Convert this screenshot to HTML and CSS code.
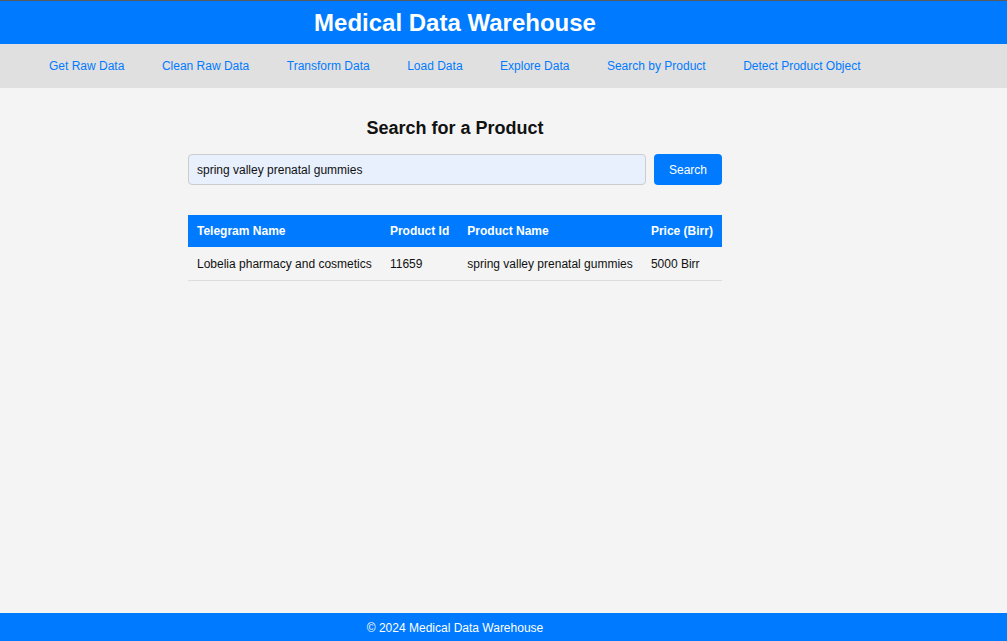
FILE: index.html
```html
<!DOCTYPE html>
<html lang="en">
<head>
<meta charset="utf-8">
<title>Medical Data Warehouse</title>
<link rel="stylesheet" href="styles.css">
</head>
<body>
<header class="site-header">
  <div class="frame"><h1 class="site-title">Medical Data Warehouse</h1></div>
</header>
<nav class="site-nav">
  <a href="#">Get Raw Data</a>
  <a href="#">Clean Raw Data</a>
  <a href="#">Transform Data</a>
  <a href="#">Load Data</a>
  <a href="#">Explore Data</a>
  <a href="#">Search by Product</a>
  <a href="#">Detect Product Object</a>
</nav>
<main class="main">
  <div class="frame">
    <section class="search">
      <h2 class="search-title">Search for a Product</h2>
      <form class="search-form">
        <input class="search-input" type="text" value="spring valley prenatal gummies">
        <button class="search-btn" type="button">Search</button>
      </form>
      <table class="results">
        <thead>
          <tr><th>Telegram Name</th><th>Product Id</th><th>Product Name</th><th>Price (Birr)</th></tr>
        </thead>
        <tbody>
          <tr><td>Lobelia pharmacy and cosmetics</td><td>11659</td><td>spring valley prenatal gummies</td><td>5000 Birr</td></tr>
        </tbody>
      </table>
    </section>
  </div>
</main>
<footer class="site-footer">
  <div class="frame">© 2024 Medical Data Warehouse</div>
</footer>
</body>
</html>
```

FILE: styles.css
```css
* { box-sizing: border-box; }
html, body { margin: 0; padding: 0; }
body {
  font-family: "Liberation Sans", Arial, sans-serif;
  background: #f4f4f4;
  color: #111;
  min-height: 100vh;
  display: flex;
  flex-direction: column;
  border-top: 1px solid #5a5a5a;
}
.frame { width: 910px; }
.site-header {
  background: #007bff;
  color: #fff;
  height: 43px;
}
.site-title {
  margin: 0;
  font-size: 24px;
  line-height: 43px;
  font-weight: bold;
  text-align: center;
}
.site-nav {
  background: #e0e0e0;
  height: 44px;
  display: flex;
  align-items: center;
  gap: 37.5px;
  padding-left: 49px;
}
.site-nav a {
  color: #007bff;
  text-decoration: none;
  font-size: 12px;
}
.main { flex: 1; padding-top: 30px; }
.search { width: 534px; margin: 0 auto; }
.search-title {
  margin: 0 0 15px;
  font-size: 18px;
  line-height: 21px;
  text-align: center;
}
.search-form { display: flex; gap: 8px; margin: 0 0 30px; }
.search-input {
  flex: 1;
  height: 31px;
  border: 1px solid #ccc;
  border-radius: 4px;
  background: #e8f0fe;
  padding: 0 8px;
  font-family: inherit;
  font-size: 12px;
  color: #111;
}
.search-btn {
  width: 68px;
  height: 31px;
  border: 0;
  border-radius: 4px;
  background: #007bff;
  color: #fff;
  font-family: inherit;
  font-size: 12px;
}
.results {
  width: 100%;
  border-collapse: collapse;
  font-size: 12px;
  line-height: 14px;
}
.results th {
  background: #007bff;
  color: #fff;
  text-align: left;
  padding: 9px;
  font-weight: bold;
  white-space: nowrap;
}
.results td {
  padding: 10px 9px 9px;
  border-bottom: 1px solid #ddd;
  white-space: nowrap;
}
.site-footer {
  background: #007bff;
  color: #fff;
  height: 28px;
  font-size: 12px;
  line-height: 30px;
  text-align: center;
}
```
